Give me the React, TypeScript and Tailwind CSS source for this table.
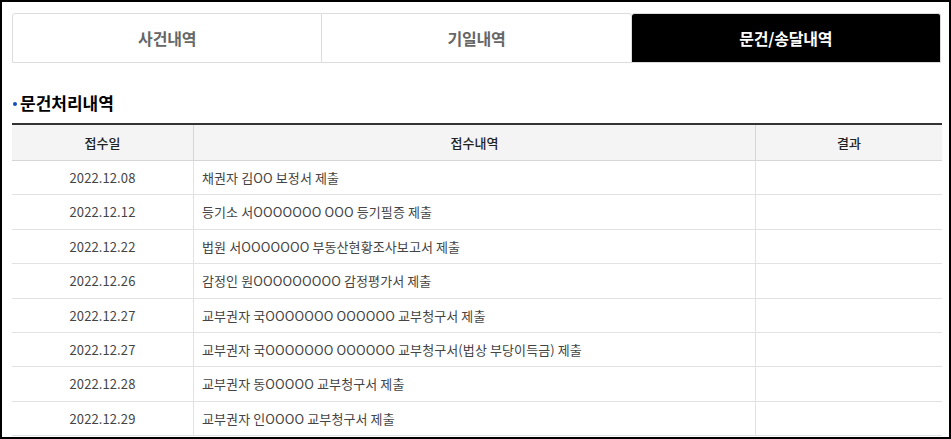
import React from "react";

const rows: [string, string][] = [
  ["2022.12.08", "채권자 김OO 보정서 제출"],
  ["2022.12.12", "등기소 서OOOOOOO OOO 등기필증 제출"],
  ["2022.12.22", "법원 서OOOOOOO 부동산현황조사보고서 제출"],
  ["2022.12.26", "감정인 원OOOOOOOOO 감정평가서 제출"],
  ["2022.12.27", "교부권자 국OOOOOOO OOOOOO 교부청구서 제출"],
  ["2022.12.27", "교부권자 국OOOOOOO OOOOOO 교부청구서(법상 부당이득금) 제출"],
  ["2022.12.28", "교부권자 동OOOOO 교부청구서 제출"],
  ["2022.12.29", "교부권자 인OOOO 교부청구서 제출"],
];

export default function App() {
  return (
    <div
      className="w-[951px] h-[439px] border-2 border-black bg-white overflow-hidden box-border"
      style={{ fontFamily: '"Noto Sans CJK KR", "Noto Sans", sans-serif' }}
    >
      <div className="pl-[10px] pr-[7px] pt-[11px]">
        <div className="flex w-[929px] h-[50px]">
          <div className="flex-1 flex items-center justify-center border border-[#dcdcdc] rounded-tl-[3px] text-[16px] font-bold text-[#666] tracking-[-0.2px]">
            사건내역
          </div>
          <div className="flex-1 flex items-center justify-center border border-l-0 border-[#dcdcdc] rounded-tr-[3px] text-[16px] font-bold text-[#666] tracking-[-0.2px]">
            기일내역
          </div>
          <div className="flex-1 flex items-center justify-center bg-black border border-[#dcdcdc] border-l-0 border-b-[#dcdcdc] rounded-tl-[3px] rounded-tr-[3px] text-[16px] font-bold text-white tracking-[-0.2px]">
            문건/송달내역
          </div>
        </div>

        <div className="mt-[28px] mb-[8px] h-[24px] flex items-center">
          <span className="w-[4px] h-[4px] rounded-full bg-[#1a4db8] ml-[1px] mr-[3px] mt-[2px]"></span>
          <span className="text-[17px] font-bold text-black leading-[24px]">
            문건처리내역
          </span>
        </div>

        <div className="w-[930px] border-t-2 border-[#333] text-[13px]">
          <div className="grid grid-cols-[182px_562px_1fr] h-[36px] bg-[#f4f4f4] border-b border-[#d6d6d6] text-[#222] font-medium">
            <div className="flex items-center justify-center border-r border-[#d6d6d6]">접수일</div>
            <div className="flex items-center justify-center border-r border-[#d6d6d6]">접수내역</div>
            <div className="flex items-center justify-center">결과</div>
          </div>
          {rows.map(([d, t], i) => (
            <div
              key={i}
              className="grid grid-cols-[182px_562px_1fr] h-[34.4px] border-b border-[#e2e2e2] text-[#444]"
            >
              <div className="flex items-center justify-center border-r border-[#e2e2e2] tracking-[0.1px]">{d}</div>
              <div className="flex items-center pl-[8px] border-r border-[#e2e2e2] tracking-[0.1px]">{t}</div>
              <div></div>
            </div>
          ))}
        </div>
      </div>
    </div>
  );
}
